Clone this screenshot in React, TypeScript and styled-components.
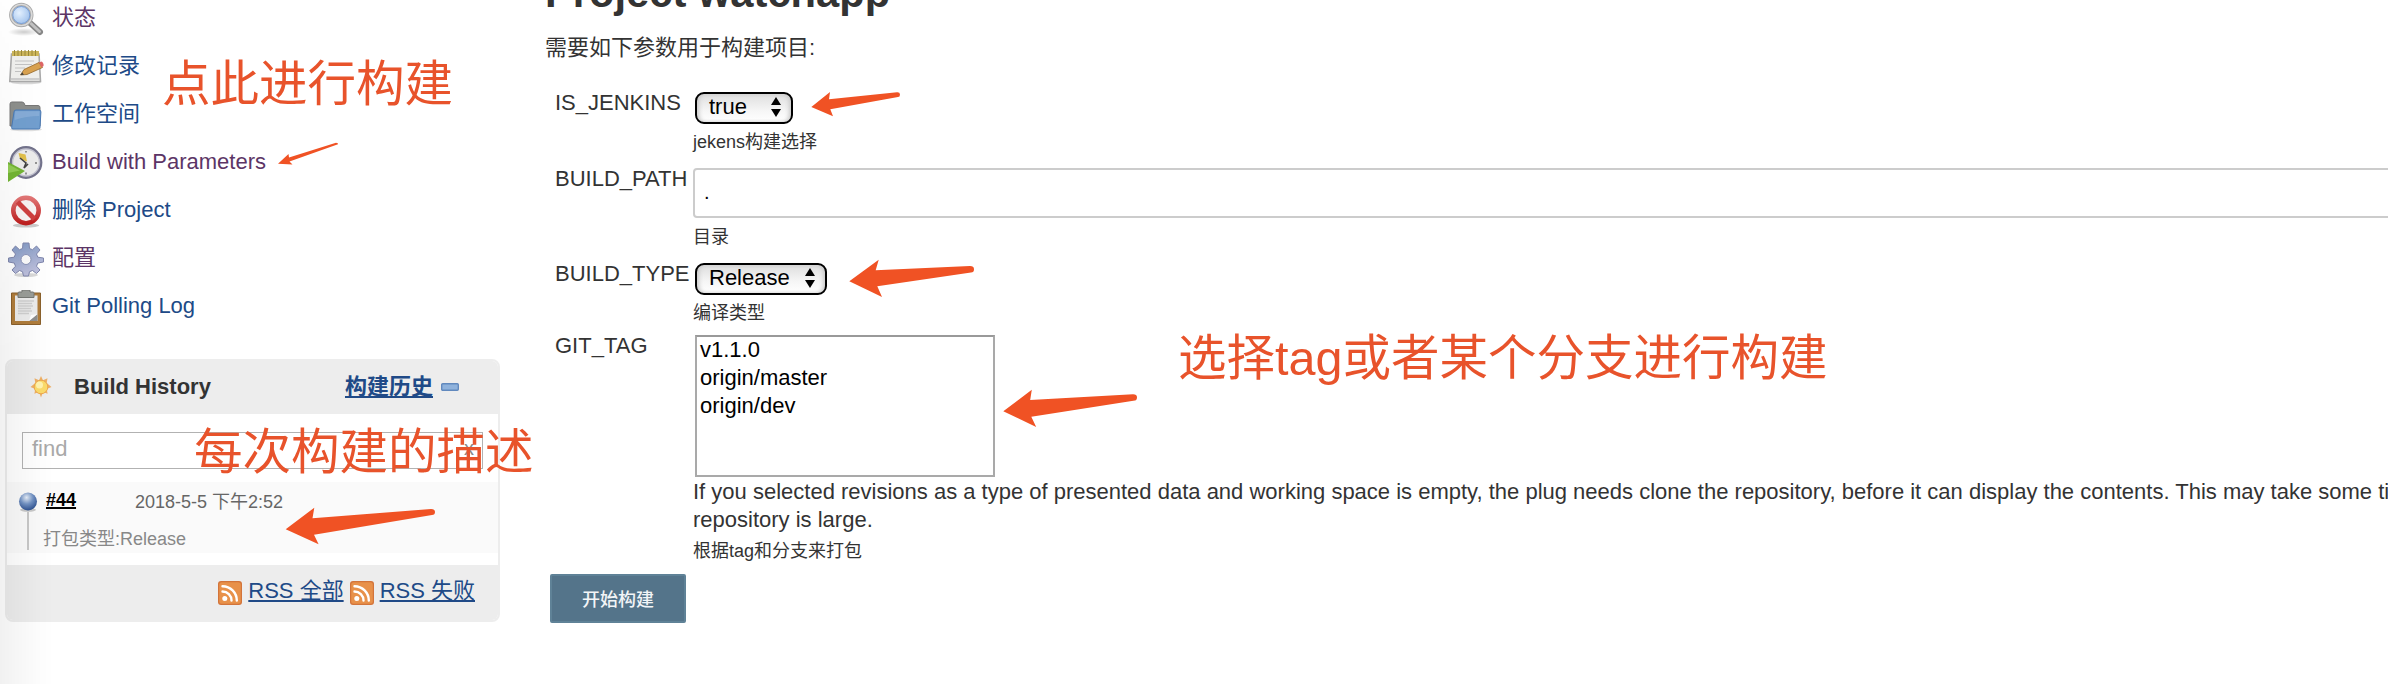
import React from 'react';
import styled, { createGlobalStyle } from 'styled-components';

const latin = '"Liberation Sans", "Noto Sans CJK SC", sans-serif';

const GlobalStyle = createGlobalStyle`
  * { box-sizing: border-box; }
  html, body { margin: 0; background: #fff; }
  body { font: 22px/28px ${latin}; color: #333; overflow: hidden; }
`;

const Page = styled.div`
  position: relative;
  display: flex;
  width: 2388px;
  height: 684px;
  overflow: hidden;
  background: #fff;
`;

const Sidebar = styled.aside`
  position: relative;
  flex: 0 0 545px;
  padding: 2px 0 0 5px;
`;

const EdgeShade = styled.div`
  position: absolute;
  inset: 0 auto 0 0;
  width: 54px;
  pointer-events: none;
  background: linear-gradient(to right, rgba(0, 0, 0, 0.055), rgba(0, 0, 0, 0.012) 70%, rgba(0, 0, 0, 0));
  mask-image: linear-gradient(to bottom, rgba(0, 0, 0, 0.1), #000 360px);
`;

const Tasks = styled.nav`
  display: flex;
  flex-direction: column;
  gap: 12px;
  padding-left: 3px;
`;

const Task = styled.a<{ $visited?: boolean }>`
  display: flex;
  gap: 8px;
  height: 36px;
  color: ${(p) => (p.$visited ? '#5c3566' : '#204a87')};
  text-decoration: none;
  line-height: 31px;
`;

const Icon = styled.svg<{ $w: number; $h: number }>`
  display: block;
  flex: none;
  width: ${(p) => p.$w}px;
  height: ${(p) => p.$h}px;
`;

const Panel = styled.section`
  width: 495px;
  margin-top: 33px;
  border: 2px solid #ededed;
  border-radius: 8px;
  overflow: hidden;
`;

const PanelHead = styled.header`
  display: flex;
  align-items: center;
  height: 53px;
  padding: 0 39px 2px 23px;
  background: #ededed;
  font-weight: bold;
`;

const PanelTitle = styled.span`
  flex: 1;
  margin-left: 22px;
`;

const Link = styled.a`
  color: #204a87;
  text-decoration: underline;
  text-underline-offset: 2px;
  text-decoration-thickness: 2px;
  text-decoration-skip-ink: none;
`;

const Trend = styled(Link)`
  margin-right: 8px;
`;

const SearchRow = styled.div`
  padding: 18px 15px 13px;
`;

const SearchBox = styled.div`
  display: flex;
  justify-content: space-between;
  height: 37px;
  padding: 0 8px 0 9px;
  border: 1.5px solid #b2b2b2;
  color: #a9a9a9;
  line-height: 31px;
`;

const Clear = styled.span`
  color: #888;
  font-size: 20px;
`;

const BuildRow = styled.div`
  display: flex;
  height: 71px;
  margin-bottom: 12px;
  padding: 10px 0 0 11px;
  background: #fafafa;
  font-size: 18px;
`;

const Rail = styled.div`
  display: flex;
  flex-direction: column;
  align-items: center;
  width: 20px;
  height: 58px;
  &::after {
    content: '';
    flex: 1;
    width: 2px;
    background: #c8c8c8;
  }
`;

const BuildInfo = styled.div`
  display: flex;
  flex-direction: column;
  padding-left: 5px;
`;

const BuildTop = styled.div`
  display: flex;
  height: 37px;
  padding-left: 3px;
  line-height: 17px;
`;

const BuildNumber = styled.a`
  width: 89px;
  color: #000;
  font-weight: bold;
  text-decoration: underline;
  text-decoration-thickness: 1.5px;
`;

const BuildDate = styled.span`
  color: #666;
  line-height: 20px;
`;

const BuildNote = styled.span`
  color: #888;
  line-height: 20px;
`;

const PanelFoot = styled.footer`
  display: flex;
  justify-content: flex-end;
  align-items: flex-start;
  gap: 6px;
  height: 55px;
  padding: 12px 23px 0 0;
  background: #ededed;
`;

const FootIcon = styled.span`
  padding-top: 4px;
`;

const Main = styled.main`
  flex: 1;
  min-width: 0;
  margin-top: -31px;
`;

const Title = styled.h1`
  margin: 0 0 17px;
  font-size: 41.7px;
  line-height: 48px;
`;

const Intro = styled.p`
  margin: 0 0 26px;
`;

const Param = styled.div<{ $height: number }>`
  display: grid;
  grid-template-columns: 138px 1fr;
  height: ${(p) => p.$height}px;
  padding-left: 10px;
`;

const Label = styled.label`
  padding-top: 1px;
`;

const Field = styled.div`
  min-width: 0;
  padding-top: 4px;
`;

const Select = styled.div<{ $width: number }>`
  display: flex;
  justify-content: space-between;
  align-items: center;
  width: ${(p) => p.$width}px;
  height: 32px;
  margin-left: 2px;
  padding: 0 9px 2px 12px;
  border: 2px solid #000;
  border-radius: 9px;
  background: linear-gradient(#dedede, #f6f6f6 60%, #fff);
  box-shadow: inset 3px 0 4px -1px #c9c9c9, inset -3px 0 4px -1px #c9c9c9;
  color: #000;
`;

const Help = styled.div<{ $gap: number }>`
  margin-top: ${(p) => p.$gap}px;
  font-size: 18px;
  line-height: 24px;
`;

const TextInput = styled.div`
  height: 50px;
  margin-right: -20px;
  padding: 8px 9px;
  border: 2px solid #ccc;
  border-radius: 4px;
  color: #000;
  font-size: 20px;
`;

const ListBox = styled.ul`
  width: 300px;
  height: 142px;
  margin: 0 0 0 2px;
  padding: 0 3px;
  border: 2px solid #a9a9a9;
  border-top-color: #999;
  color: #000;
  list-style: none;
`;

const Option = styled.li`
  height: 28px;
  line-height: 25px;
`;

const Notice = styled.div`
  padding-top: 1px;
  white-space: nowrap;
`;

const Submit = styled.button`
  display: block;
  width: 136px;
  height: 49px;
  margin: 11px 0 0 5px;
  padding: 0 0 2px;
  border: 2px solid #5f8297;
  border-radius: 2px;
  background: #54748a;
  color: #f2f5f7;
  font: 500 18px/24px "Noto Sans CJK SC", sans-serif;
`;

const Overlay = styled.div`
  position: absolute;
  inset: 0;
  pointer-events: none;
`;

const ArrowLayer = styled.svg`
  position: absolute;
  inset: 0;
`;

const Note = styled.span<{ $x: number; $y: number }>`
  position: absolute;
  left: ${(p) => p.$x}px;
  top: ${(p) => p.$y}px;
  color: #e8532b;
  font-size: 48.5px;
  line-height: 60px;
  white-space: nowrap;
`;

const Magnifier = () => (
  <Icon $w={36} $h={36} viewBox="0 0 36 36">
    <defs>
      <radialGradient id="lens" cx=".4" cy=".4"><stop offset="0" stopColor="#e4f1ff" /><stop offset="1" stopColor="#a9c8ef" /></radialGradient>
      <radialGradient id="lensShade"><stop offset="0" stopColor="#000" stopOpacity=".2" /><stop offset="1" stopColor="#000" stopOpacity="0" /></radialGradient>
    </defs>
    <ellipse cx="16" cy="30" rx="16" ry="4" fill="url(#lensShade)" />
    <path d="M20.500 19.500L32 30" stroke="#888" strokeWidth="6" strokeLinecap="round" />
    <path d="M23 21.500L31.500 29.500" stroke="#c2c2c2" strokeWidth="3" strokeLinecap="round" />
    <circle cx="13.300" cy="13" r="10.500" fill="url(#lens)" stroke="#aaa" strokeWidth="3.400" />
    <circle cx="13.300" cy="13" r="10.600" fill="none" stroke="#dcdcdc" strokeWidth="1.400" />
    <circle cx="13.300" cy="13" r="8.500" fill="none" stroke="#7ba0d6" strokeWidth="1" />
  </Icon>
);

const Notepad = () => (
  <Icon $w={36} $h={36} viewBox="0 0 36 36">
    <ellipse cx="18" cy="32.500" rx="15" ry="1.800" fill="#000" opacity=".15" />
    <path d="M3.500 4H31L32.500 31.500H1.800Z" fill="#f0f0ee" stroke="#aaa" strokeWidth="1.600" />
    <path d="M3 29H32" stroke="#c4c4c4" strokeWidth="1.500" />
    <path d="M4 1h27v5H4z" fill="#cdb75c" />
    <path d="M6.500 0v6M10 0v6M13.500 0v6M17 0v6M20.500 0v6M24 0v6M27.500 0v6" stroke="#9c8a3c" strokeWidth="1" />
    <path d="M7 11h19M7 14.500h17M7 18h10M7 21.500h6" stroke="#c3c3c3" strokeWidth="1.200" />
    <path d="M12.500 25L16 19.500L31 12.500L34.500 17.500L19 24.500Z" fill="#d9a250" stroke="#94682c" strokeWidth=".8" />
    <path d="M31 12.500L33.500 11.500Q36 13 35.500 16L33.500 17.500Z" fill="#d66" />
    <path d="M12.500 25L14.200 22.200L16 24.700Z" fill="#444" />
  </Icon>
);

const Folder = () => (
  <Icon $w={36} $h={36} viewBox="0 0 36 36">
    <ellipse cx="18" cy="31.500" rx="16" ry="1.800" fill="#000" opacity=".12" />
    <path d="M2 28V6Q2 4 4 4H14Q16 4 16.500 6L17 7.500H30Q32 7.500 32 9.500V28Z" fill="#8d8f8c" stroke="#777" />
    <path d="M6 14Q6 12 8 12H31Q33 12 32.900 14L32 29.500Q32 31 30.500 31H5Q3.500 31 3.600 29.500Z" fill="#729fcf" stroke="#4b7ab5" />
    <path d="M7.200 13.200H31.500L31.200 18Q18 18 6.600 22Z" fill="#a4c1e4" opacity=".4" />
  </Icon>
);

const ClockPlay = () => (
  <Icon $w={36} $h={36} viewBox="0 0 36 36">
    <circle cx="18" cy="16.500" r="14.900" fill="#ececec" stroke="#73738c" strokeWidth="3" />
    <circle cx="18" cy="16.500" r="13.500" fill="none" stroke="#c5c5d2" strokeWidth="1.400" />
    <path d="M10.500 7L17.500 8.500L19 15.500L12 13Z" fill="#e1c04a" />
    <path d="M12 12L18 17L16 22L20 18" stroke="#444" strokeWidth="1.600" fill="none" />
    <path d="M18 5V6.500M18 26.500V28.500M27 17H29" stroke="#777" strokeWidth="1.500" />
    <path d="M0 16L17 25L0 36Z" fill="#73b534" />
    <path d="M0 18L12 24.500L0 27Z" fill="#9ed562" opacity=".7" />
  </Icon>
);

const Stop = () => (
  <Icon $w={36} $h={36} viewBox="0 0 36 36">
    <defs><linearGradient id="stopRed" x2="0" y2="1"><stop offset="0" stopColor="#e27575" /><stop offset="1" stopColor="#bf2020" /></linearGradient></defs>
    <ellipse cx="18" cy="31.500" rx="13" ry="2" fill="#000" opacity=".2" />
    <circle cx="18" cy="16.500" r="12.700" fill="#f8f4f4" stroke="url(#stopRed)" strokeWidth="4.600" />
    <path d="M9.500 8L26.500 25" stroke="#cf4040" strokeWidth="5" />
  </Icon>
);

const Gear = () => (
  <Icon $w={36} $h={36} viewBox="0 0 36 36">
    <defs><linearGradient id="gearFill" x2=".4" y2="1"><stop offset="0" stopColor="#7d97c2" /><stop offset="1" stopColor="#bdbfdc" /></linearGradient></defs>
    <ellipse cx="18" cy="33" rx="12" ry="2" fill="#000" opacity=".15" />
    <path
      d="M15 1h6l.5 5.500 3 1.200L28.500 4 32 8l-3.500 4 1.300 3.200 5.700.8v4l-5.700 1-1.300 3.200L32 28l-3.500 3.500-4-3-3 1.200L20.500 34h-5l-1-4.300-3-1.200-4 3L4 28l3.500-3.800L6.200 21 .5 20v-4l5.700-.8L7.500 12 4 8l3.500-4 4 3.700 3-1.200Z"
      fill="url(#gearFill)"
      stroke="#8087ad"
    />
    <circle cx="18" cy="17.500" r="5" fill="#fbfbfb" stroke="#8b94b8" />
  </Icon>
);

const Clipboard = () => (
  <Icon $w={36} $h={36} viewBox="0 0 36 36">
    <path d="M3.500 3h29v31.500h-29z" fill="#b07d3c" stroke="#8a602c" />
    <path d="M7 5.500h22.500V31H7z" fill="#ececec" />
    <path d="M29.500 24V31H21Z" fill="#8f8f8f" />
    <path d="M21 31L23 25L29.500 24Z" fill="#fff" />
    <path d="M10 11h16M10 13.500h14M10 16h15M10 18.500h13M10 21h14M10 23.500h11" stroke="#cfcfcf" strokeWidth="1.400" />
    <path d="M14 0h8v2h3q1 0 1 1.500V7.500H10V3.500Q10 2 11 2h3z" fill="#9a9d98" stroke="#777975" />
  </Icon>
);

const Sun = () => (
  <Icon $w={22} $h={22} viewBox="0 0 22 22">
    <path d="M11 0l2 4.200 4.500-2-.8 4.700 4.800 4.100-4.800 2.100.9 4.700-4.600-1.800L11 21.500 9 16l-4.600 1.800.9-4.700L.5 11l4.800-4.100-.8-4.700 4.500 2z" fill="#eeb066" />
    <circle cx="11" cy="11" r="6.800" fill="#fbdb6b" stroke="#eda94f" />
    <circle cx="9.500" cy="9" r="3.500" fill="#fff3b0" />
  </Icon>
);

const Minus = () => (
  <Icon $w={18} $h={8} viewBox="0 0 18 8">
    <rect x=".7" y=".7" width="16.600" height="6.600" rx="1" fill="#8fb2dc" stroke="#6189be" strokeWidth="1.400" />
  </Icon>
);

const Ball = () => (
  <Icon $w={20} $h={20} viewBox="0 0 20 20">
    <defs><radialGradient id="ballBlue" cx=".42" cy=".28" r=".72"><stop offset="0" stopColor="#e6eef9" /><stop offset=".5" stopColor="#7393c4" /><stop offset="1" stopColor="#2f5291" /></radialGradient></defs>
    <ellipse cx="10" cy="17.800" rx="8" ry="2" fill="#000" opacity=".2" />
    <circle cx="10" cy="9.500" r="9" fill="url(#ballBlue)" />
  </Icon>
);

const Rss = () => (
  <Icon $w={24} $h={24} viewBox="0 0 24 24">
    <rect width="24" height="24" rx="3" fill="#d3743a" />
    <rect x="1.200" y="1.200" width="21.600" height="21.600" rx="2.500" fill="#e8914a" />
    <circle cx="6.800" cy="17.500" r="2.500" fill="#fff" />
    <path d="M4.500 10.500A9 9 0 0 1 13.500 19.500M4.500 5.200A14.300 14.300 0 0 1 18.800 19.500" fill="none" stroke="#fff" strokeWidth="2.400" strokeLinecap="round" />
  </Icon>
);

const Stepper = () => (
  <Icon $w={12} $h={20} viewBox="0 0 12 20">
    <path d="M6 0l5 8H1zM6 20l5-8H1z" fill="#000" />
  </Icon>
);

const tasks = [
  { icon: <Magnifier />, text: '状态', visited: true },
  { icon: <Notepad />, text: '修改记录' },
  { icon: <Folder />, text: '工作空间' },
  { icon: <ClockPlay />, text: 'Build with Parameters', visited: true },
  { icon: <Stop />, text: '删除 Project' },
  { icon: <Gear />, text: '配置', visited: true },
  { icon: <Clipboard />, text: 'Git Polling Log' },
];

const arrows = [
  'M278 163.700L288.500 154L289 157.500L336 142.800Q338.500 143 338 144.200L289.500 161.500L292.500 164.500Z',
  'M811.300 107L830 92L829 99.300L897 92.200Q900 92 900 94.500T898 97L830.300 109.300L833 116.300Z',
  'M849.300 281.300L878.700 259.700L875.700 270.300L970 266Q974 266 974 269.200T971 272.500L877.300 286.300L882 297Z',
  'M1003.300 411.300L1031.800 389.700L1030.200 400L1133 394.300Q1137 394.300 1137 397.300T1135 400.500L1031.300 416.700L1036.200 427Z',
  'M285.700 529.300L314.300 507.700L312.500 518.300L431 509Q435 509 435 512T432 515L314 534.700L318.600 544.300Z',
];

export default function App() {
  return (
    <Page>
      <GlobalStyle />
      <Sidebar>
        <Tasks>
          {tasks.map((t) => (
            <Task key={t.text} $visited={t.visited}>
              {t.icon}
              {t.text}
            </Task>
          ))}
        </Tasks>
        <Panel>
          <PanelHead>
            <Sun />
            <PanelTitle>Build History</PanelTitle>
            <Trend>构建历史</Trend>
            <Minus />
          </PanelHead>
          <SearchRow>
            <SearchBox>
              find
              <Clear>x</Clear>
            </SearchBox>
          </SearchRow>
          <BuildRow>
            <Rail>
              <Ball />
            </Rail>
            <BuildInfo>
              <BuildTop>
                <BuildNumber>#44</BuildNumber>
                <BuildDate>2018-5-5 下午2:52</BuildDate>
              </BuildTop>
              <BuildNote>打包类型:Release</BuildNote>
            </BuildInfo>
          </BuildRow>
          <PanelFoot>
            <FootIcon><Rss /></FootIcon>
            <Link>RSS 全部</Link>
            <FootIcon><Rss /></FootIcon>
            <Link>RSS 失败</Link>
          </PanelFoot>
        </Panel>
        <EdgeShade />
      </Sidebar>
      <Main>
        <Title>Project watchapp</Title>
        <Intro>需要如下参数用于构建项目:</Intro>
        <Param $height={76}>
          <Label>IS_JENKINS</Label>
          <Field>
            <Select $width={98}>true<Stepper /></Select>
            <Help $gap={6}>jekens构建选择</Help>
          </Field>
        </Param>
        <Param $height={95}>
          <Label>BUILD_PATH</Label>
          <Field>
            <TextInput>.</TextInput>
            <Help $gap={7}>目录</Help>
          </Field>
        </Param>
        <Param $height={72}>
          <Label>BUILD_TYPE</Label>
          <Field>
            <Select $width={132}>Release<Stepper /></Select>
            <Help $gap={6}>编译类型</Help>
          </Field>
        </Param>
        <Param $height={232}>
          <Label>GIT_TAG</Label>
          <Field>
            <ListBox>
              <Option>v1.1.0</Option>
              <Option>origin/master</Option>
              <Option>origin/dev</Option>
            </ListBox>
            <Notice>
              If you selected revisions as a type of presented data and working space is empty, the plug needs clone the
              repository, before it can display the contents. This may take some time, if
              <br />
              repository is large.
            </Notice>
            <Help $gap={5}>根据tag和分支来打包</Help>
          </Field>
        </Param>
        <Submit>开始构建</Submit>
      </Main>
      <Overlay>
        <ArrowLayer width="2388" height="684" viewBox="0 0 2388 684">
          {arrows.map((d) => (
            <path key={d} d={d} fill="#f05224" />
          ))}
        </ArrowLayer>
        <Note $x={162} $y={54}>点此进行构建</Note>
        <Note $x={194} $y={422}>每次构建的描述</Note>
        <Note $x={1178} $y={328}>选择tag或者某个分支进行构建</Note>
      </Overlay>
    </Page>
  );
}
